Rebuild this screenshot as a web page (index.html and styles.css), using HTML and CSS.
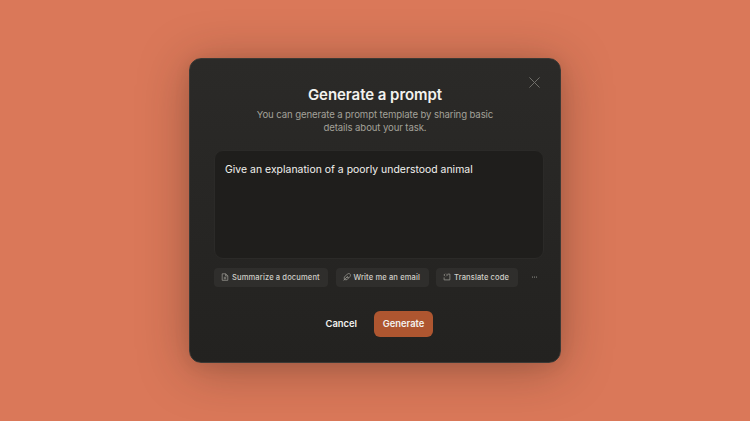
FILE: index.html
```html
<!DOCTYPE html>
<html lang="en">
<head>
<meta charset="utf-8">
<title>Generate a prompt</title>
<link rel="stylesheet" href="styles.css">
</head>
<body>
<main class="modal" role="dialog" aria-labelledby="title">
  <button class="close" aria-label="Close">
    <svg width="11" height="11" viewBox="0 0 11 11"><path d="M.7.7l9.6 9.6M10.3.7L.7 10.3"/></svg>
  </button>
  <h1 class="title" id="title"><span>Generate a prompt</span></h1>
  <p class="subtitle"><span>You can generate a prompt template by sharing basic</span><br><span>details about your task.</span></p>
  <div class="field"><span>Give an explanation of a poorly understood animal</span></div>
  <div class="chips">
    <button class="chip chip-doc">
      <svg class="icon" width="8" height="8" viewBox="0 0 8 8"><path d="M1.2.8h3.5l2.1 2v4.5H1.2zM4.6.9v2h2.1M2.8 4.3h2.4M2.8 5.7h2.4"/></svg>
      <span>Summarize a document</span>
    </button>
    <button class="chip chip-mail">
      <svg class="icon" width="8" height="8" viewBox="0 0 8 8"><path d="M.6 7.4L4.8 3.2M1.3 6.6V4.1L4.3 1.1C5.2.3 6.4.4 7 1s.8 1.8-.1 2.7L4 6.7H1.3M3.4 4.6h2.4"/></svg>
      <span>Write me an email</span>
    </button>
    <button class="chip chip-code">
      <svg class="icon" width="8" height="8" viewBox="0 0 8 8"><path d="M4.6 1.1H6.9V6.9H1.1V4.4M2 .8L.9 2 2 3.2M3.4.8L4.5 2 3.4 3.2"/></svg>
      <span>Translate code</span>
    </button>
    <button class="more" aria-label="More examples">
      <svg width="6" height="2" viewBox="0 0 6 2"><circle cx=".5" cy="1" r=".55"/><circle cx="2.5" cy="1" r=".55"/><circle cx="4.5" cy="1" r=".55"/></svg>
    </button>
  </div>
  <div class="actions">
    <button class="cancel"><span>Cancel</span></button>
    <button class="generate"><span>Generate</span></button>
  </div>
</main>
</body>
</html>
```
FILE: styles.css
```css
* { box-sizing: border-box; }
html, body { height: 100%; margin: 0; }
body {
  display: flex;
  justify-content: center;
  align-items: flex-start;
  padding-top: 57.5px;
  overflow: hidden;
  background: #da7859;
  font-family: Inter, "Noto Sans", sans-serif;
  color: #f3f2ef;
}
button {
  border: 0;
  margin: 0;
  padding: 0;
  background: none;
  font: inherit;
  color: inherit;
}
svg { display: block; flex: none; }
span { white-space: nowrap; }

.modal {
  position: relative;
  width: 372px;
  height: 305.5px;
  padding: 27.5px 16px 0 24px;
  border: 1px solid #3c3935;
  border-radius: 12px;
  background: linear-gradient(#2b2a28, #232220);
  box-shadow: 0 6px 50px rgba(38, 30, 20, .34), 0 3px 16px rgba(38, 30, 20, .08);
}
.close { position: absolute; top: 18.5px; right: 20px; }
.close path { fill: none; stroke: #74736e; stroke-width: .95; stroke-linecap: round; }

.title {
  margin: 0 8px 0 0;
  font-size: 15px;
  line-height: 18px;
  font-weight: 600;
  text-align: center;
  letter-spacing: -.05px;
}
.subtitle {
  margin: 3.5px 8px 0 0;
  font-size: 9.6px;
  line-height: 13.5px;
  letter-spacing: -.11px;
  text-align: center;
  color: #a3a199;
}
.field {
  width: 330px;
  height: 109px;
  margin-top: 15.5px;
  padding: 10.6px 10px;
  border: 1px solid #2b2a28;
  border-radius: 9px;
  background: #1f1e1c;
  font-size: 10.4px;
  line-height: 16px;
  letter-spacing: .03px;
}
.chips { display: flex; gap: 7.5px; margin-top: 8.5px; }
.chip {
  display: flex;
  align-items: center;
  gap: 3px;
  height: 19.5px;
  padding: 1px 0 0 7px;
  border-radius: 4px;
  background: #2f2e2c;
  font-size: 7.6px;
  font-weight: 500;
  letter-spacing: .1px;
  color: #d0cec8;
}
.chip-doc { width: 114px; }
.chip-mail { width: 93px; }
.chip-code { width: 81.5px; }
.icon { margin-top: -1px; }
.icon path { fill: none; stroke: #9b9993; stroke-width: .75; stroke-linejoin: round; }
.more { display: flex; align-items: center; margin-left: 7px; }
.more circle { fill: #a4a29c; }

.actions {
  display: flex;
  align-items: center;
  gap: 17.5px;
  margin: 23.5px 0 0 111.5px;
  font-size: 9.4px;
  font-weight: 600;
}
.cancel { width: 31px; }
.generate {
  width: 59px;
  height: 26px;
  border-radius: 6px;
  background: #ae5630;
}
```
